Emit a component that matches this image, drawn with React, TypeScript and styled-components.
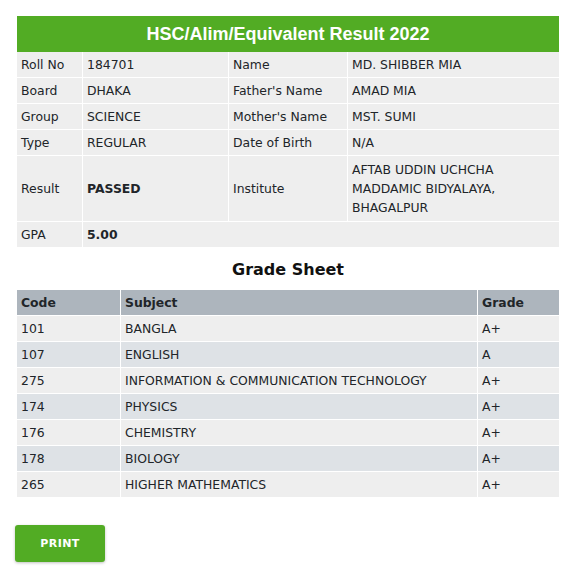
import * as React from 'react';
import styled, { createGlobalStyle, css } from 'styled-components';

const GlobalStyle = createGlobalStyle`
  body {
    margin: 0;
    background: #ffffff;
    font-family: "DejaVu Sans", Verdana, sans-serif;
    color: #212529;
  }
`;

const green = '#52ac24';

const Page = styled.div`
  padding: 16px 17px 8px 17px;
  width: 542px;
`;

const Banner = styled.div`
  background: ${green};
  color: #ffffff;
  height: 36px;
  display: flex;
  align-items: center;
  justify-content: center;
  font-family: "Liberation Sans", Arial, sans-serif;
  font-weight: bold;
  font-size: 18px;
`;

const Table = styled.table`
  width: 100%;
  border-collapse: separate;
  border-spacing: 0;
  table-layout: fixed;
  font-size: 12.4px;
`;

const Cell = styled(({ bold, shade, head, tall, ...props }) => <td {...props} />)`
  ${({ bold, shade, head, tall }: { bold?: boolean; shade?: boolean; head?: boolean; tall?: boolean }) => css`
    background: ${head ? '#adb5bd' : shade ? '#dee2e6' : '#eeeeee'};
    border-right: 1px solid #ffffff;
    border-bottom: 1px solid #ffffff;
    padding: ${tall ? '4px 4px' : '3px 4px'};
    line-height: 19px;
    font-weight: ${bold || head ? 'bold' : 'normal'};
    vertical-align: middle;
    &:last-child {
      border-right: none;
    }
  `}
`;

const Heading = styled.h3`
  margin: 0;
  height: 42px;
  display: flex;
  align-items: center;
  justify-content: center;
  font-size: 16px;
  font-weight: bold;
  color: #111111;
`;

const PrintButton = styled.button`
  margin: 27px 0 0 -2px;
  width: 90px;
  height: 37px;
  background: ${green};
  color: #ffffff;
  border: none;
  border-radius: 3px;
  box-shadow: 0 1px 3px rgba(0, 0, 0, 0.25);
  font-family: "DejaVu Sans", Verdana, sans-serif;
  font-weight: bold;
  font-size: 11px;
  letter-spacing: 0.4px;
  cursor: pointer;
`;

const info: [string, string, string, string][] = [
  ['Roll No', '184701', 'Name', 'MD. SHIBBER MIA'],
  ['Board', 'DHAKA', "Father's Name", 'AMAD MIA'],
  ['Group', 'SCIENCE', "Mother's Name", 'MST. SUMI'],
  ['Type', 'REGULAR', 'Date of Birth', 'N/A'],
];

const grades: [string, string, string][] = [
  ['101', 'BANGLA', 'A+'],
  ['107', 'ENGLISH', 'A'],
  ['275', 'INFORMATION & COMMUNICATION TECHNOLOGY', 'A+'],
  ['174', 'PHYSICS', 'A+'],
  ['176', 'CHEMISTRY', 'A+'],
  ['178', 'BIOLOGY', 'A+'],
  ['265', 'HIGHER MATHEMATICS', 'A+'],
];

export default function App() {
  return (
    <>
      <GlobalStyle />
      <Page>
        <Banner>HSC/Alim/Equivalent Result 2022</Banner>
        <Table>
          <colgroup>
            <col style={{ width: 66 }} />
            <col style={{ width: 146 }} />
            <col style={{ width: 119 }} />
            <col />
          </colgroup>
          <tbody>
            {info.map((r) => (
              <tr key={r[0]}>
                {r.map((c, i) => (
                  <Cell key={i}>{c}</Cell>
                ))}
              </tr>
            ))}
            <tr>
              <Cell tall>Result</Cell>
              <Cell tall bold>PASSED</Cell>
              <Cell tall>Institute</Cell>
              <Cell tall>
                AFTAB UDDIN UCHCHA
                <br />
                MADDAMIC BIDYALAYA,
                <br />
                BHAGALPUR
              </Cell>
            </tr>
            <tr>
              <Cell>GPA</Cell>
              <Cell bold colSpan={3}>
                5.00
              </Cell>
            </tr>
          </tbody>
        </Table>
        <Heading>Grade Sheet</Heading>
        <Table>
          <colgroup>
            <col style={{ width: 104 }} />
            <col style={{ width: 357 }} />
            <col />
          </colgroup>
          <thead>
            <tr>
              <Cell head>Code</Cell>
              <Cell head>Subject</Cell>
              <Cell head>Grade</Cell>
            </tr>
          </thead>
          <tbody>
            {grades.map((g, i) => (
              <tr key={g[0]}>
                {g.map((c, j) => (
                  <Cell key={j} shade={i % 2 === 1}>
                    {c}
                  </Cell>
                ))}
              </tr>
            ))}
          </tbody>
        </Table>
        <PrintButton>PRINT</PrintButton>
      </Page>
    </>
  );
}
